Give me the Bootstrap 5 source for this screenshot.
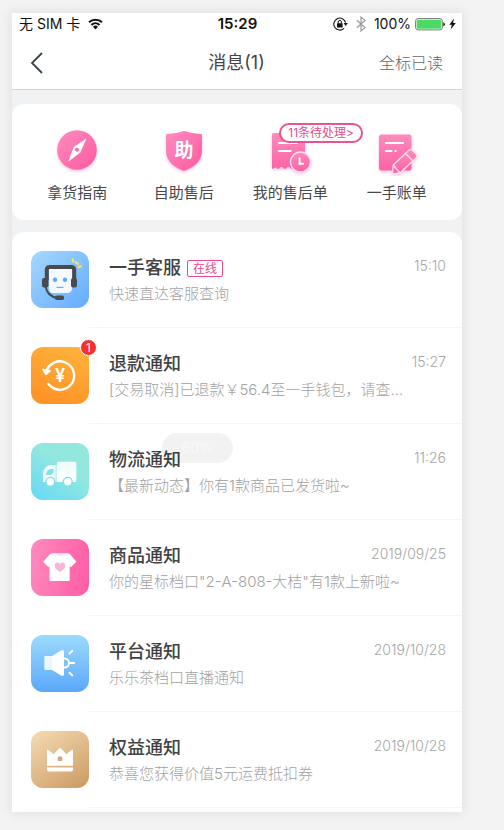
<!DOCTYPE html>
<html lang="zh-CN">
<head>
<meta charset="utf-8">
<meta name="viewport" content="width=device-width, initial-scale=1">
<title>消息</title>
<link href="https://cdn.jsdelivr.net/npm/bootstrap@5.3.0/dist/css/bootstrap.min.css" rel="stylesheet">
<style>
body{background:#f3f3f3;font-family:Inter,"Noto Sans CJK SC",sans-serif;color:#4a4a4a}
svg{display:block;flex:none}
.page-wrap{padding:13px 42px 18px 12px}
.phone{background:#f1f2f4;box-shadow:0 0 10px 2px rgba(0,0,0,.07)}
.three{display:grid;grid-template-columns:1fr auto 1fr;align-items:center}
.status{height:22px;padding:0 6px 0 7px;font-size:14px;line-height:20px;color:#111}
.status-time{font-size:15px;font-weight:600}
.topbar{height:55px;padding:2px 19px 0 18px;border-bottom:1px solid #d2d2d2}
.topbar h1{font-size:18px;line-height:24px;font-weight:400;color:#444}
.read-all{font-size:16px;line-height:24px;font-weight:300;color:#666}
.panel{background:#fff;border-radius:12px}
.tools{margin-top:14px;padding:24px 12px 16px}
.tool{color:#484848;font-size:15px;line-height:22px}
.tool svg{margin-bottom:6px}
.pending{left:50%;top:-5px;margin-left:-11px;border:2px solid #ec5290;border-radius:10px;background:#fff;color:#e84d88;font-size:12px;line-height:16px;padding:0 7px;white-space:nowrap}
.inbox{margin-top:12px;padding-bottom:4px;border-radius:12px 12px 0 0}
.msg{padding-left:19px;color:inherit}
.tile{width:58px;height:57px;border-radius:12px;margin-top:19px}
.t-service{background:linear-gradient(135deg,#a6d8ff,#64abff)}
.t-refund{background:linear-gradient(20deg,#ff8f24,#ffb43c)}
.t-ship{background:linear-gradient(35deg,#66d8f8,#92e8df 60%)}
.t-goods{background:linear-gradient(100deg,#ff8abf,#ff5ca4)}
.t-platform{background:linear-gradient(180deg,#9bdafd,#5ba8fa)}
.t-rights{background:linear-gradient(145deg,#f5dcb4,#cb9961)}
.count{top:-8px;right:-8px;width:17px;height:17px;border-radius:50%;background:#f5302f;border:1px solid #fff;color:#fff;font-size:12px;line-height:15px;text-align:center}
.msg-body{height:96px;padding:24px 16px 0 20px;border-bottom:1px solid #f5f5f5;min-width:0}
.msg-title{font-size:18px;line-height:24px;font-weight:500;color:#424242}
.online{font-size:12px;line-height:15px;border:1px solid #ee4a8b;border-radius:2px;color:#ee4a8b;padding:0 5px;margin-left:6px}
.msg time{font-size:14px;line-height:20px;font-weight:300;color:#a6a6a6;align-self:flex-start}
.msg-text{font-size:15px;line-height:22px;font-weight:300;color:#a2a2a2;margin-top:3px}
.toast-pill{left:150px;top:420px;width:71px;height:30px;border-radius:15px;background:rgba(0,0,0,.05);color:#f8f8f8;font-size:14px;line-height:30px;text-align:center}
</style>
<script src="https://cdn.jsdelivr.net/npm/bootstrap@5.3.0/dist/js/bootstrap.bundle.min.js"></script>
</head>
<body>
<div class="page-wrap">
<main class="phone position-relative">
<div class="bg-white">
 <div class="status three">
  <div class="d-flex align-items-center gap-2"><span>无 SIM 卡</span>
   <svg width="15" height="12" viewBox="0 0 15 12" fill="none" stroke="#111" stroke-width="2"><path d="M1 4.3a9.3 9.3 0 0 1 13 0M3.4 6.9a6 6 0 0 1 8.2 0"/><path d="M5 8.7a3.8 3.8 0 0 1 5 0L7.500 11.500z" fill="#111" stroke="none"/></svg>
  </div>
  <span class="status-time">15:29</span>
  <div class="d-flex align-items-center justify-content-end">
   <svg width="15" height="14" viewBox="0 0 15 14"><path d="M12.600 5.500A6 6 0 1 0 11 11.400" fill="none" stroke="#111" stroke-width="1.100"/><path d="M10.600 6h4.200l-2.100 3z" fill="#111"/><rect x="4" y="6.300" width="5.600" height="4.200" rx=".5" fill="#111"/><path d="M5.200 6.500V5a1.600 1.600 0 0 1 3.200 0v1.500" fill="none" stroke="#111"/></svg>
   <svg class="mx-2" width="10" height="16" viewBox="0 0 10 16" fill="none" stroke="#999" stroke-width="1.200"><path d="M.8 4.300 9 11.600 5 15V1l4 3.400-8.200 7.300"/></svg>
   <span class="me-1">100%</span>
   <svg width="30" height="13" viewBox="0 0 30 13"><rect x=".6" y=".6" width="26.800" height="11.300" rx="2.500" fill="#fff" stroke="#777"/><rect x="1.700" y="1.700" width="24.600" height="9.100" rx="1.500" fill="#4cd964"/><path d="M28.300 4.200q1.500.5 1.500 2t-1.500 2z" fill="#111"/></svg>
   <svg class="ms-1" width="7" height="12" viewBox="0 0 7 12"><path d="M5 .5.3 6.700h2.500L1.700 11.500 6.800 5H4.100z" fill="#111"/></svg>
  </div>
 </div>
 <header class="topbar three">
  <button type="button" class="btn p-0 border-0 text-start" aria-label="返回"><svg width="14" height="22" viewBox="0 0 14 22" fill="none" stroke="#38434c" stroke-width="1.800"><path d="M12 1 2 11l10 10"/></svg></button>
  <h1 class="m-0">消息(1)</h1>
  <button type="button" class="btn p-0 border-0 text-end read-all">全标已读</button>
 </header>
</div>

<svg width="0" height="0" class="position-absolute" aria-hidden="true"><defs>
 <linearGradient id="pink" x1="0" y1="0" x2="1" y2="1"><stop offset="0" stop-color="#ff8cc0"/><stop offset="1" stop-color="#fb5aa0"/></linearGradient>
 <linearGradient id="paper" x1="0" y1="0" x2="0" y2="1"><stop offset="0" stop-color="#ff8abd"/><stop offset="1" stop-color="#fb63a5"/></linearGradient>
 <filter id="glow" x="-20%" y="-20%" width="140%" height="150%"><feDropShadow dx="0" dy="1.500" stdDeviation="1.500" flood-color="#fb5aa0" flood-opacity=".35"/></filter>
</defs></svg>

<nav class="panel tools d-flex">
 <a href="#" class="tool col-3 d-flex flex-column align-items-center text-decoration-none">
  <svg width="48" height="48" viewBox="0 0 48 48"><circle cx="24" cy="22" r="19.800" fill="url(#pink)" filter="url(#glow)"/><path d="M33.500 10.500 27.300 24.500 15.200 33.700 20.700 19z" fill="#fff"/><circle cx="24" cy="21.800" r="2" fill="#fb69a9"/></svg>
  <span>拿货指南</span></a>
 <a href="#" class="tool col-3 d-flex flex-column align-items-center text-decoration-none">
  <svg width="48" height="48" viewBox="0 0 48 48"><path d="M6 6.200Q15 6 24 3q9 3 18 3.200V23c0 10-8 16.500-18 20C14 39.500 6 33 6 23z" fill="url(#pink)" filter="url(#glow)"/><text x="24" y="29" font-size="19" font-weight="700" text-anchor="middle" fill="#fff">助</text></svg>
  <span>自助售后</span></a>
 <a href="#" class="tool col-3 d-flex flex-column align-items-center text-decoration-none position-relative">
  <svg width="48" height="48" viewBox="0 0 48 48"><g filter="url(#glow)"><path d="M8 5h29q2 0 2 2v34l-4-2.500q-2.500 4-5 1-1 0-1.500-.5-2.500 4-5 0-1-.5-2 0-2.500 4-5 0-1-.5-2 0-2.500 4-4.500.3L6 41V7q0-2 2-2z" fill="url(#paper)"/><circle cx="34.500" cy="34" r="10" fill="url(#paper)" stroke="#ffe0ef" stroke-width="1.400"/></g><path d="M13 15h18M13 23h11.500" stroke="#fff" stroke-width="2.200" stroke-linecap="round"/><path d="M33.600 29.500v6.200h4.400" fill="none" stroke="#fff" stroke-width="2"/></svg>
  <span>我的售后单</span>
  <span class="pending position-absolute">11条待处理&gt;</span></a>
 <a href="#" class="tool col-3 d-flex flex-column align-items-center text-decoration-none">
  <svg width="48" height="48" viewBox="0 0 48 48"><g filter="url(#glow)"><rect x="6" y="6.500" width="32.500" height="36" rx="2.500" fill="url(#paper)"/><path d="M19.500 46l.7-9L36 22q1.500-1.300 3 0l4.500 4.500q1.300 1.500 0 3L27 45z" fill="url(#paper)" stroke="#ffe0ef" stroke-width="1.300" stroke-linejoin="round"/></g><path d="M20.200 37 27 45M32.500 25.500l7.500 7.500" stroke="#ffe0ef" stroke-width="1.200"/><path d="M13 15h17M13 23h5.500M22.500 23h.1" stroke="#fff" stroke-width="2.200" stroke-linecap="round"/></svg>
  <span>一手账单</span></a>
</nav>

<section class="panel inbox">
 <a href="#" class="msg d-flex align-items-start text-decoration-none">
  <div class="tile t-service"><svg width="58" height="57" viewBox="0 0 58 57"><path d="M18 18h23v19q0 5-5 5H22q-4 0-4-5z" fill="#f5f8ff"/><path d="M15.800 29V19q0-3 3-3h21.400q3 0 3 3v10" fill="none" stroke="#484a4e" stroke-width="4"/><rect x="11" y="27" width="6.500" height="9.500" rx="2" fill="#484a4e"/><rect x="40" y="27" width="6" height="9.500" rx="2" fill="#484a4e"/><path d="M14.500 35q1.500 10.500 12 11.800" fill="none" stroke="#484a4e" stroke-width="1.900"/><rect x="24" y="44.500" width="9" height="4.500" rx="1.800" fill="#484a4e"/><circle cx="24" cy="28.700" r="2.200" fill="#5cadf8"/><circle cx="34" cy="28.700" r="2.200" fill="#5cadf8"/><path d="M25.500 36.400h7" stroke="#65b4fa" stroke-width="1.300"/><path d="m41.500 7.500.9 4M44.300 10.500l3.500 3.300M46.800 16.500l4-1.500" stroke="#ffe45c" stroke-width="2.100"/></svg></div>
  <div class="msg-body flex-grow-1"><div class="d-flex align-items-center"><span class="msg-title">一手客服</span><span class="online">在线</span><time class="ms-auto">15:10</time></div><div class="msg-text">快速直达客服查询</div></div>
 </a>
 <a href="#" class="msg d-flex align-items-start text-decoration-none">
  <div class="tile t-refund position-relative"><svg width="58" height="57" viewBox="0 0 58 57"><path d="M15.200 25A14.200 14.200 0 1 1 17.500 37" fill="none" stroke="#fff" stroke-width="2.400" stroke-linecap="round"/><path d="m11.700 21.700 3.200 5.600 4.600-4" fill="#fff" stroke="#fff" stroke-width="1.800" stroke-linejoin="round"/><text x="29" y="34.500" font-size="18" font-weight="600" text-anchor="middle" fill="#fff">¥</text></svg><span class="count position-absolute">1</span></div>
  <div class="msg-body flex-grow-1"><div class="d-flex align-items-center"><span class="msg-title">退款通知</span><time class="ms-auto">15:27</time></div><div class="msg-text">[交易取消]已退款￥56.4至一手钱包，请查...</div></div>
 </a>
 <a href="#" class="msg d-flex align-items-start text-decoration-none">
  <div class="tile t-ship"><svg width="58" height="57" viewBox="0 0 58 57"><defs><linearGradient id="cab"><stop offset="0" stop-color="#fff"/><stop offset=".7" stop-color="#fff" stop-opacity=".9"/><stop offset="1" stop-color="#fff" stop-opacity=".45"/></linearGradient><linearGradient id="cargo" x1="0" y1="0" x2="0" y2="1"><stop offset="0" stop-color="#fff" stop-opacity=".85"/><stop offset="1" stop-color="#fff"/></linearGradient></defs><path d="M12 39v-9q2-8 8-8h6v17z" fill="url(#cab)"/><rect x="26" y="18.800" width="19.300" height="20.200" rx="1.500" fill="url(#cargo)"/><path d="M14.500 32q2-6 5-6h3v3.500L20 32z" fill="#7fe0e9"/><g fill="#fff" stroke="#80e1e9" stroke-width="1.400"><circle cx="19.300" cy="38.800" r="4.400"/><circle cx="36.700" cy="38.800" r="4.400"/></g></svg></div>
  <div class="msg-body flex-grow-1"><div class="d-flex align-items-center"><span class="msg-title">物流通知</span><time class="ms-auto">11:26</time></div><div class="msg-text">【最新动态】你有1款商品已发货啦~</div></div>
 </a>
 <a href="#" class="msg d-flex align-items-start text-decoration-none">
  <div class="tile t-goods"><svg width="58" height="57" viewBox="0 0 58 57"><path d="M20.500 14.500 24 14q5 3 10 0l3.500.5q1 .3 2 1.300l5.800 7-5.300 5.500L38.700 27v14q0 1-1 1H19.500q-1 0-1-1V27L17.500 28.300l-5.300-5.500 6.300-7q1-1 2-1.300z" fill="#fff"/><path d="M24 14q5 6 10 0z" fill="#ffdcec"/><path d="M29 33c-3-2-5.300-3.800-5.300-6.600 0-3 3.700-4 5.300-1.200 1.600-2.800 5.300-1.800 5.300 1.200C34.300 29.200 32 31 29 33z" fill="#f9b5d6"/></svg></div>
  <div class="msg-body flex-grow-1"><div class="d-flex align-items-center"><span class="msg-title">商品通知</span><time class="ms-auto">2019/09/25</time></div><div class="msg-text">你的星标档口"2-A-808-大桔"有1款上新啦~</div></div>
 </a>
 <a href="#" class="msg d-flex align-items-start text-decoration-none">
  <div class="tile t-platform"><svg width="58" height="57" viewBox="0 0 58 57"><rect x="13.300" y="21" width="8.200" height="14" rx="1" fill="#fff" fill-opacity=".85"/><path d="M21 21l9.500-5.800q2.500-.8 2.500 1.300v23q0 2-2.500 1.300L21 35z" fill="#fff"/><path d="M33.500 23.600a4.500 4.500 0 0 1 0 9M38.500 18.500l2.700-2.700M38.500 28h4.700M38.500 37.700l2.700 2.700" fill="none" stroke="#fff" stroke-width="2" stroke-linecap="round"/></svg></div>
  <div class="msg-body flex-grow-1"><div class="d-flex align-items-center"><span class="msg-title">平台通知</span><time class="ms-auto">2019/10/28</time></div><div class="msg-text">乐乐茶档口直播通知</div></div>
 </a>
 <a href="#" class="msg d-flex align-items-start text-decoration-none">
  <div class="tile t-rights"><svg width="58" height="57" viewBox="0 0 58 57"><path d="M16 19.500q.2-1.500 1.500-.6l5 4.400 5.500-5.700q1-.8 2 0l5.500 5.700 5-4.400q1.300-.9 1.500.6v15.200H16zM16 36.500h26v2q0 2-2 2H18q-2 0-2-2z" fill="#fff"/><circle cx="29" cy="27.700" r="2.500" fill="#d9a970"/></svg></div>
  <div class="msg-body flex-grow-1"><div class="d-flex align-items-center"><span class="msg-title">权益通知</span><time class="ms-auto">2019/10/28</time></div><div class="msg-text">恭喜您获得价值5元运费抵扣券</div></div>
 </a>
</section>
<div class="toast-pill position-absolute">60%</div>
</main>
</div>
</body>
</html>
